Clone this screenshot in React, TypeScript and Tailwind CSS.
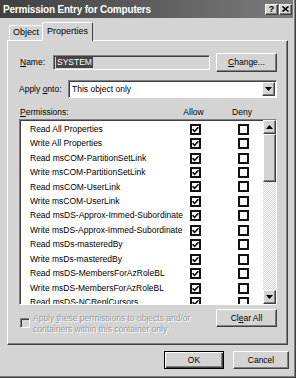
import React from "react"

const raised =
  "border border-t-white border-l-white border-r-[#404040] border-b-[#404040] shadow-[inset_-1px_-1px_0_#808080] bg-[#d4d4d4]"
const sunken =
  "border border-t-[#808080] border-l-[#808080] border-r-white border-b-white shadow-[inset_1px_1px_0_#404040]"

const permissions = [
  "Read All Properties",
  "Write All Properties",
  "Read msCOM-PartitionSetLink",
  "Write msCOM-PartitionSetLink",
  "Read msCOM-UserLink",
  "Write msCOM-UserLink",
  "Read msDS-Approx-Immed-Subordinate",
  "Write msDS-Approx-Immed-Subordinate",
  "Read msDs-masteredBy",
  "Write msDs-masteredBy",
  "Read msDS-MembersForAzRoleBL",
  "Write msDS-MembersForAzRoleBL",
  "Read msDS-NCReplCursors",
]

const CheckBox = ({ checked }: { checked: boolean }) => (
  <span className="flex h-[11px] w-[11px] shrink-0 items-center justify-center border-2 border-[#111] bg-white">
    {checked && (
      <svg width="7" height="7" viewBox="0 0 7 7">
        <path d="M0.5 3.2 L2.6 5.3 L6.5 1.2" fill="none" stroke="#000" strokeWidth="1.6" />
      </svg>
    )}
  </span>
)

const Arrow = ({ up }: { up?: boolean }) => (
  <svg width="7" height="4" viewBox="0 0 7 4">
    <path d={up ? "M3.5 0 L7 4 L0 4 Z" : "M0 0 L7 0 L3.5 4 Z"} fill="#000" />
  </svg>
)

export default function App() {
  return (
    <div className="h-[378px] w-[296px] overflow-hidden border-r border-b border-[#404040] bg-[#d4d4d4] font-['Liberation_Sans',Arial,sans-serif] text-[8.5px] text-black">
      <div className="flex h-full flex-col border-r border-b border-[#808080] pr-[1px] pb-[1px]">
        {/* title bar */}
        <div className="flex h-[18px] shrink-0 items-center bg-gradient-to-r from-[#404040] to-[#7c7c7c] pr-[1px] pl-[3px]">
          <span className="text-[10px] font-bold tracking-[-0.2px] text-white">
            Permission Entry for Computers
          </span>
          <div className="ml-auto flex items-center">
            <div className={`${raised} flex h-[11px] w-[13px] items-center justify-center text-[9px] leading-none font-bold`}>
              ?
            </div>
            <div className={`${raised} ml-[1px] flex h-[11px] w-[13px] items-center justify-center`}>
              <svg width="7" height="6" viewBox="0 0 7 6">
                <path d="M0.5 0.5 L6.5 5.5 M6.5 0.5 L0.5 5.5" stroke="#000" strokeWidth="1.6" />
              </svg>
            </div>
          </div>
        </div>

        {/* tabs */}
        <div className="flex h-[22px] shrink-0 items-end pl-[9px]">
          <div className="flex h-[15px] w-[33px] items-center justify-center rounded-t-[2px] border-t border-l border-t-white border-l-white text-[9px]">
            Object
          </div>
          <div className="relative z-10 mb-[-1px] flex h-[19px] w-[51px] items-center justify-center rounded-t-[2px] border-t border-r border-l border-t-white border-r-[#404040] border-l-white bg-[#d4d4d4] pb-[1px] text-[9px]">
            Properties
          </div>
        </div>

        {/* panel */}
        <div className={`${raised} ml-[7px] flex h-[305px] w-[281px] shrink-0 flex-col pt-[12px] pr-[10px] pl-[11px]`}>
          <div className="flex h-[19px] items-center">
            <span className="w-[34px] pl-[1px]">
              <u>N</u>ame:
            </span>
            <div className={`${sunken} flex h-[15px] w-[157px] items-center pl-[2px]`}>
              <span className="bg-[#454545] px-[1px] leading-[11px] text-white">SYSTEM</span>
            </div>
            <div className={`${raised} ml-auto flex h-[19px] w-[61px] items-center justify-center`}>
              <span>
                <u>C</u>hange...
              </span>
            </div>
          </div>

          <div className="mt-[8px] flex h-[18px] items-center">
            <span className="w-[49px]">
              Apply <u>o</u>nto:
            </span>
            <div className={`${sunken} flex h-[18px] flex-1 items-center bg-white pr-[1px] pl-[3px]`}>
              <span>This object only</span>
              <div className={`${raised} ml-auto flex h-[14px] w-[13px] items-center justify-center`}>
                <Arrow />
              </div>
            </div>
          </div>

          <div className="mt-[8px] flex h-[12px] items-center">
            <span className="w-[163px] pl-[1px]">
              <u>P</u>ermissions:
            </span>
            <span className="w-[23px] text-center">Allow</span>
            <span className="ml-[26px] w-[22px] text-center">Deny</span>
          </div>

          <div className={`${sunken} mt-[1px] flex h-[186px] bg-white`}>
            <div className="flex-1 overflow-hidden pt-[2px]">
              {permissions.map(name => (
                <div key={name} className="flex h-[14.45px] items-center pl-[10px]">
                  <span className="w-[160px] whitespace-nowrap">{name}</span>
                  <CheckBox checked />
                  <span className="ml-[37px]">
                    <CheckBox checked={false} />
                  </span>
                </div>
              ))}
            </div>
            <div className="flex w-[13px] flex-col">
              <div className={`${raised} flex h-[14px] items-center justify-center`}>
                <Arrow up />
              </div>
              <div className={`${raised} h-[48px]`} />
              <div className="flex-1 bg-[repeating-conic-gradient(#ffffff_0_25%,#d4d4d4_0_50%)] bg-[length:2px_2px]" />
              <div className={`${raised} flex h-[14px] items-center justify-center`}>
                <Arrow />
              </div>
            </div>
          </div>

          <div className="mt-[4px] flex items-start">
            <div className="mt-[4px] flex items-start pl-[1px]">
              <span className={`${sunken} mt-[5px] h-[10px] w-[10px] bg-[#d4d4d4]`} />
              <span className="ml-[3px] leading-[11px] text-[#9a9a9a] [text-shadow:1px_1px_0_#fff]">
                Apply <u>t</u>hese permissions to objects and/or
                <br />
                containers within this container only
              </span>
            </div>
            <div className={`${raised} ml-auto flex h-[18px] w-[61px] items-center justify-center`}>
              <span>
                Cl<u>e</u>ar All
              </span>
            </div>
          </div>
        </div>

        {/* dialog buttons */}
        <div className="mt-[6px] flex justify-end pr-[4px]">
          <div className="flex h-[18px] w-[60px] items-center justify-center border border-black bg-[#d4d4d4] shadow-[inset_1px_1px_0_#fff,inset_-1px_-1px_0_#404040,inset_-2px_-2px_0_#808080]">
            OK
          </div>
          <div className={`${raised} ml-[9px] flex h-[18px] w-[56px] items-center justify-center`}>
            Cancel
          </div>
        </div>
      </div>
    </div>
  )
}
